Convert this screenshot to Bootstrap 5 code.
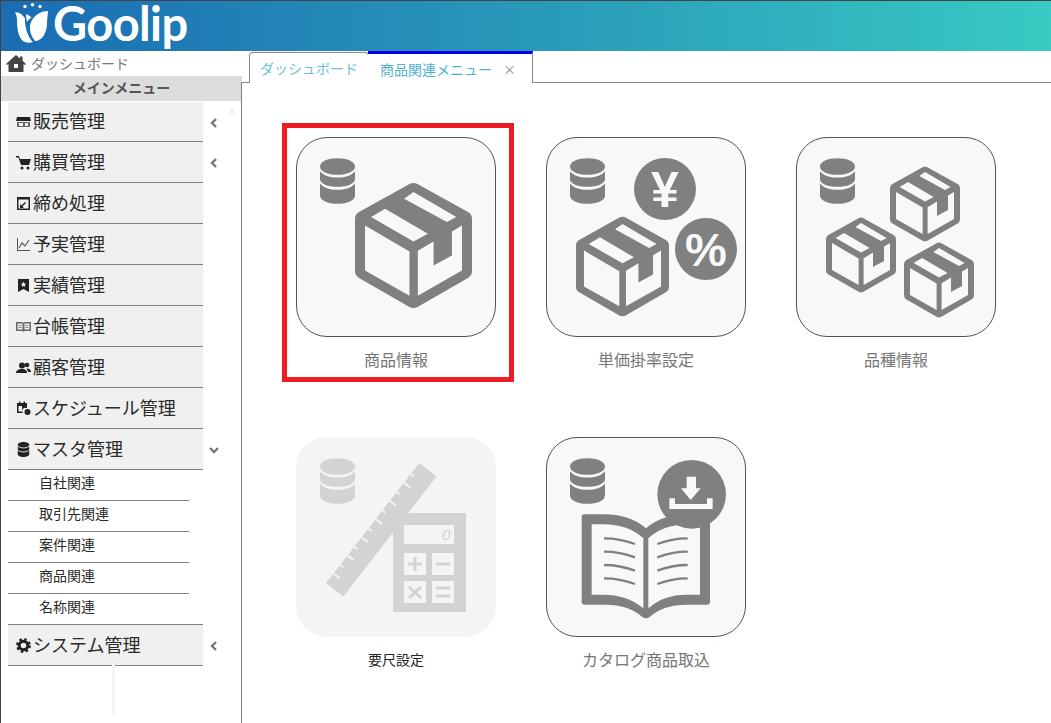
<!DOCTYPE html>
<html lang="ja">
<head>
<meta charset="utf-8">
<title>Goolip</title>
<link href="https://cdn.jsdelivr.net/npm/bootstrap@5.3.0/dist/css/bootstrap.min.css" rel="stylesheet">
<style>
html,body{height:100%}
body{font-family:"Noto Sans CJK JP","Liberation Sans",sans-serif;background:#fff;color:#222;overflow:hidden}
.gl-head{height:51px;border-top:1px solid #444;border-left:1px solid #444;background:linear-gradient(90deg,#1a6cb3 0%,#2a9dba 55%,#38cac3 100%);color:#fff;padding-left:14px;gap:4px}
.gl-logo{font:700 47px/40px "Lato","Liberation Sans",sans-serif;letter-spacing:-.6px;margin-top:2px}
.gl-tulip{flex:none;margin-top:2px}
.gl-body{height:672px;border-left:1px solid #444}
.gl-side{width:240px;flex:none;position:relative}
.gl-dash{height:25px;padding-left:5px;gap:5px;font-size:14px;color:#777;line-height:1;padding-bottom:1px}
.gl-title{height:25px;margin-right:-1px;background:#ddd;color:#555;font-size:14px;font-weight:700;line-height:23px;text-align:center;margin-bottom:1px}
.gl-list{list-style:none;margin:0;padding:0}
.gl-row{margin-left:7px;width:195px;height:41px;background:#f0f0f0;border-bottom:1px solid #808080;font-size:18px;line-height:1;padding:0 0 3px 8px;gap:2px;position:relative;color:#2a2a2a}
.gl-row.gl-first{height:40px}
.gl-row.gl-top{border-top:1px solid #808080;height:42px}
.gl-row svg.gl-ic{width:15px;height:15px;flex:none;fill:#222;margin-top:3px}
.gl-chev{position:absolute;left:201px;top:50%;margin-top:-4px;width:10px;height:10px;fill:none;stroke:#777;stroke-width:2.4}
.gl-sub{margin-left:7px;width:181px;height:31px;border-bottom:1px solid #808080;font-size:14px;padding:0 0 6px 31px;line-height:1;color:#2a2a2a}
.gl-sub.gl-last{border-bottom:0;height:30px}
.gl-track{position:absolute;left:111px;top:614px;width:3px;height:50px;background:#f4f4f4}
.gl-tri{position:absolute;left:227px;top:57px;width:0;height:0;border:4px solid transparent;border-top:0;border-bottom:5px solid #f0f0f0}
.gl-main{position:relative;flex:1 1 auto;min-width:0}
.gl-tabs{height:31px;padding-left:8px;border:0}
.gl-tab{height:31px;border:1px solid #888;border-bottom:0;border-radius:4px 4px 0 0;margin-top:1px;width:120px;color:#6cc1d8;font-size:14px;line-height:1;background:#fff}
.gl-tab.gl-on{width:165px;margin-top:0;height:32px;margin-left:-1px;border-top:3px solid #0000e6;border-left:0;border-radius:0;color:#4fb0cc;padding-left:12px;padding-right:16px;position:relative;z-index:1}
.gl-x{color:#6f8fa8;font-size:13px}
.gl-panel{border-top:1px solid #888;border-left:1px solid #808080;height:641px;padding:54px 0 0 54px}
.gl-grid{width:700px;column-gap:50px;row-gap:66px}
.gl-tile{width:200px}
.gl-art{width:200px;height:200px;display:block;border:1px solid #555;border-radius:31px;background:#f8f8f8;color:#808080;fill:#808080}
.gl-off .gl-art{border-color:#f4f4f4;background:#f4f4f4;color:#d3d3d3;fill:#d3d3d3}
.gl-cap{margin-top:10px;height:24px;line-height:24px;text-align:center;font-size:16px;color:#777}
.gl-off .gl-cap{font-size:14px;color:#222}
.gl-mark{position:absolute;left:41px;top:72px;width:232px;height:259px;border:5px solid #ed1c24;pointer-events:none}
.gl-sym{font-family:"Liberation Sans",sans-serif;font-weight:700;fill:#f8f8f8}
</style>
</head>
<body>
<svg width="0" height="0" class="position-absolute">
<defs>
<symbol id="s-box" viewBox="0 0 350 380"><path fill="currentColor" fill-rule="evenodd" d="M163 6Q175 0 187 6L338 90Q350 97 350 110L350 268Q350 280 338 287L187 374Q175 380 163 374L12 287Q0 280 0 268L0 110Q0 97 12 90ZM30 130L163 208L163 340L30 265ZM188 206L235 178L235 250L290 220L290 148L320 130L320 265L188 340ZM48 105L90 80L218 155L175 178ZM147 50L175 30L303 105L275 120Z"/></symbol>
<symbol id="s-db" viewBox="0 0 105 137"><path fill="currentColor" d="M52 0C82 0 105 10 105 25C105 40 82 50 52 50C23 50 0 40 0 25C0 10 23 0 52 0ZM0 39C10 52 30 58 52 58C75 58 95 52 105 39L105 63C105 76 82 86 52 86C23 86 0 76 0 63ZM0 76C10 89 30 95 52 95C75 95 95 89 105 76L105 112C105 127 82 137 52 137C23 137 0 127 0 112Z"/></symbol>
</defs>
</svg>

<header class="gl-head d-flex align-items-start">
  <svg class="gl-tulip" width="34" height="40" viewBox="0 0 34 40" fill="#fff">
    <circle cx="10" cy="3.500" r="1.700"/><circle cx="17.500" cy="1.800" r="1.800"/><circle cx="25" cy="3.500" r="1.700"/>
    <path d="M0 9C4 9 7 11 10 15C10 22 11 30 16 37L18 39C15 40 11 40 8 38C3 34 2 24 2 17C2 14 1 11 0 9Z"/>
    <path d="M33 8C27 8 21 11 17 17C13 23 15 32 20 38C27 38 32 30 32 20C32 15 33 11 33 8Z"/>
    <path d="M11 11C13 12 15 13 16.500 14.500C15 15.500 13 17 12 19C11.500 16 11 13 11 11Z"/>
  </svg>
  <div class="gl-logo">Goolip</div>
</header>

<div class="gl-body d-flex">
  <aside class="gl-side">
    <div class="gl-dash d-flex align-items-center">
      <svg width="20" height="17" viewBox="0 0 20 17" fill="#444"><path fill-rule="evenodd" d="M10 0L14 3.500V1.500H16.500V5.700L20 9L19 10L17.500 9V17H2.500V9L1 10L0 9ZM8 9V13H12V9Z"/></svg>
      <span>ダッシュボード</span>
    </div>
    <div class="gl-title">メインメニュー</div>
    <ul class="gl-list">
      <li class="gl-row gl-first d-flex align-items-center">
        <svg class="gl-ic" viewBox="0 0 15 15"><path d="M1 3H14L15 7H0Z"/><path d="M1 8H14V13H1ZM3 9V12H7V9ZM9 9V12H12V9Z" fill-rule="evenodd" fill="#666"/></svg>販売管理
        <svg class="gl-chev" viewBox="0 0 10 10"><path d="M7 1L3 5L7 9"/></svg>
      </li>
      <li class="gl-row d-flex align-items-center">
        <svg class="gl-ic" viewBox="0 0 15 15"><path d="M0 1H3L4 4H15L13 10H5L2.500 2.500H0Z"/><circle cx="6" cy="13" r="1.500"/><circle cx="12" cy="13" r="1.500"/></svg>購買管理
        <svg class="gl-chev" viewBox="0 0 10 10"><path d="M7 1L3 5L7 9"/></svg>
      </li>
      <li class="gl-row d-flex align-items-center">
        <svg class="gl-ic" viewBox="0 0 15 15"><path fill-rule="evenodd" d="M1 1H14V14H1ZM2.500 3.500V12.500H12.500V3.500Z"/><path d="M4 11L9 6L10 7L5 12Z"/><path d="M4 8V12H8Z"/></svg>締め処理
      </li>
      <li class="gl-row d-flex align-items-center">
        <svg class="gl-ic" viewBox="0 0 15 15"><path d="M1 1H2V13H14V14H1Z" fill="#555"/><path d="M3 11L6 6L9 9L13 3" fill="none" stroke="#555" stroke-width="1.100"/></svg>予実管理
      </li>
      <li class="gl-row d-flex align-items-center">
        <svg class="gl-ic" viewBox="0 0 15 15"><path fill-rule="evenodd" d="M2 1H13V14L7.500 11L2 14ZM7.500 3.500L6.700 5.500L4.700 5.700L6.200 7L5.800 9L7.500 8L9.200 9L8.800 7L10.300 5.700L8.300 5.500Z"/></svg>実績管理
      </li>
      <li class="gl-row d-flex align-items-center">
        <svg class="gl-ic" viewBox="0 0 15 15"><path fill="#666" fill-rule="evenodd" d="M0 3H6Q7 3 7.500 4Q8 3 9 3H15V12H9Q8 12 7.500 13Q7 12 6 12H0ZM1.500 4.500V10.500H6.500V4.500ZM8.500 4.500V10.500H13.500V4.500Z"/><path fill="#888" d="M2.500 6H5.500V7H2.500ZM2.500 8H5.500V9H2.500ZM9.500 6H12.500V7H9.500ZM9.500 8H12.500V9H9.500Z"/></svg>台帳管理
      </li>
      <li class="gl-row d-flex align-items-center">
        <svg class="gl-ic" viewBox="0 0 15 15"><circle cx="6" cy="5.500" r="3"/><path d="M0 13C0 10 3 9 6 9C9 9 11 10 11 13Z"/><circle cx="11" cy="5" r="2.300"/><path d="M10 8.500C13 8 15 9.500 15 12H12C12 10.500 11 9 10 8.500Z"/></svg>顧客管理
      </li>
      <li class="gl-row d-flex align-items-center">
        <svg class="gl-ic" viewBox="0 0 15 15"><path fill-rule="evenodd" d="M1 2H3V0.500H4.500V2H7.500V0.500H9V2H11V7H10A3 3 0 0 0 7 12H1ZM2.500 5V10.500H6V5Z"/><circle cx="11.500" cy="11" r="3"/></svg>スケジュール管理
      </li>
      <li class="gl-row d-flex align-items-center">
        <svg class="gl-ic" viewBox="0 0 105 137" style="width:13px;margin-left:1px;margin-right:1px"><path d="M52 0C82 0 105 10 105 25C105 40 82 50 52 50C23 50 0 40 0 25C0 10 23 0 52 0ZM0 39C10 52 30 58 52 58C75 58 95 52 105 39L105 63C105 76 82 86 52 86C23 86 0 76 0 63ZM0 76C10 89 30 95 52 95C75 95 95 89 105 76L105 112C105 127 82 137 52 137C23 137 0 127 0 112Z"/></svg>マスタ管理
        <svg class="gl-chev" viewBox="0 0 10 10"><path d="M1 3L5 7L9 3"/></svg>
      </li>
      <li class="gl-sub d-flex align-items-center">自社関連</li>
      <li class="gl-sub d-flex align-items-center">取引先関連</li>
      <li class="gl-sub d-flex align-items-center">案件関連</li>
      <li class="gl-sub d-flex align-items-center">商品関連</li>
      <li class="gl-sub gl-last d-flex align-items-center">名称関連</li>
      <li class="gl-row gl-top d-flex align-items-center">
        <svg class="gl-ic" viewBox="0 0 15 15"><circle cx="7.500" cy="7.500" r="4.300" fill="none" stroke="#222" stroke-width="3"/><circle cx="7.500" cy="7.500" r="6.300" fill="none" stroke="#222" stroke-width="2.200" stroke-dasharray="2.500 2.450"/></svg>システム管理
        <svg class="gl-chev" viewBox="0 0 10 10"><path d="M7 1L3 5L7 9"/></svg>
      </li>
    </ul>
    <div class="gl-track"></div>
    <div class="gl-tri"></div>
  </aside>

  <main class="gl-main">
    <div class="gl-tabs d-flex">
      <div class="gl-tab d-flex align-items-center justify-content-center">ダッシュボード</div>
      <div class="gl-tab gl-on d-flex align-items-center justify-content-between"><span>商品関連メニュー</span><span class="gl-x">×</span></div>
    </div>
    <div class="gl-panel">
      <div class="gl-grid d-flex flex-wrap">
        <div class="gl-tile">
          <svg class="gl-art" viewBox="0 0 198 198">
            <use href="#s-db" x="23" y="20" width="35" height="46"/>
            <use href="#s-box" x="58" y="44" width="117" height="127"/>
          </svg>
          <div class="gl-cap">商品情報</div>
        </div>
        <div class="gl-tile">
          <svg class="gl-art" viewBox="0 0 198 198">
            <use href="#s-db" x="23" y="20" width="35" height="46"/>
            <circle cx="118" cy="51" r="31"/>
            <text class="gl-sym" x="118" y="69" font-size="50" text-anchor="middle">¥</text>
            <circle cx="159" cy="111" r="31"/>
            <text class="gl-sym" x="159" y="128" font-size="47" text-anchor="middle">%</text>
            <use href="#s-box" x="29" y="78" width="93" height="101"/>
          </svg>
          <div class="gl-cap">単価掛率設定</div>
        </div>
        <div class="gl-tile">
          <svg class="gl-art" viewBox="0 0 198 198">
            <use href="#s-db" x="23" y="20" width="35" height="46"/>
            <use href="#s-box" x="93" y="28" width="70" height="76"/>
            <use href="#s-box" x="29" y="79" width="70" height="76"/>
            <use href="#s-box" x="107" y="104" width="70" height="76"/>
          </svg>
          <div class="gl-cap">品種情報</div>
        </div>
        <div class="gl-tile gl-off">
          <svg class="gl-art" viewBox="0 0 198 198">
            <use href="#s-db" x="23" y="20" width="35" height="46"/>
            <g transform="translate(29 145) rotate(-52.200)">
              <rect width="152" height="22"/>
              <path fill="none" stroke="#f4f4f4" stroke-width="2" d="M12 0V8M23 0V4M35 0V8M46 0V4M58 0V8M69 0V4M81 0V8M92 0V4M104 0V8M115 0V4M127 0V8M138 0V4"/>
            </g>
            <rect x="96" y="75" width="73" height="99"/>
            <g fill="#f4f4f4">
              <rect x="107" y="87" width="50" height="19"/>
              <rect x="107" y="115" width="22" height="22"/>
              <rect x="135" y="115" width="22" height="22"/>
              <rect x="107" y="143" width="22" height="22"/>
              <rect x="135" y="143" width="22" height="22"/>
            </g>
            <text x="145" y="102" font-size="15" font-family="Liberation Sans" font-style="italic" fill="#d3d3d3">0</text>
            <path fill="none" stroke="#d3d3d3" stroke-width="3" d="M111 126H125M118 119V133M139 126H153M112 149L124 160M124 149L112 160M139 150H153M139 158H153"/>
          </svg>
          <div class="gl-cap">要尺設定</div>
        </div>
        <div class="gl-tile">
          <svg class="gl-art" viewBox="0 0 198 198">
            <use href="#s-db" x="23" y="20" width="35" height="46"/>
            <g transform="translate(-7 -8) scale(.3333)">
              <path fill-rule="evenodd" d="M125 262Q125 253 134 253L190 253Q270 253 318 295Q366 253 446 253L500 253Q510 253 510 262L510 515Q510 524 500 524L440 524Q370 524 330 560Q318 570 306 560Q266 524 196 524L134 524Q125 524 125 515ZM155 283L190 283Q265 283 310 325L310 535Q262 494 190 494L155 494ZM325 325Q370 283 446 283L480 283L480 494L440 494Q370 494 325 535Z"/>
              <path fill="none" stroke="#808080" stroke-width="7" d="M192 325Q240 325 285 342M192 365Q240 365 285 382M192 405Q240 405 285 422M192 445Q240 445 285 462M443 325Q395 325 352 342M443 365Q395 365 352 382M443 405Q395 405 352 422M443 445Q395 445 352 462"/>
              <circle cx="455" cy="193" r="103"/>
              <path fill="#f8f8f8" d="M440 140H468V175H482L452 210L423 175H440ZM388 205H405V222H501V205H518V237H388Z"/>
            </g>
          </svg>
          <div class="gl-cap">カタログ商品取込</div>
        </div>
      </div>
    </div>
    <div class="gl-mark"></div>
  </main>
</div>
</body>
</html>
